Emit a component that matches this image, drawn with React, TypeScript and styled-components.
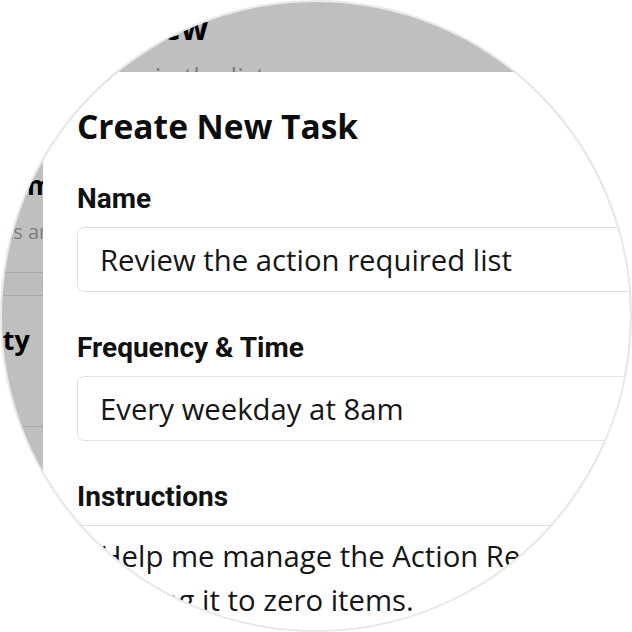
import React from "react";
import styled, { createGlobalStyle } from "styled-components";

const Global = createGlobalStyle`
  html, body { margin: 0; padding: 0; background: #ffffff; }
  body { width: 632px; height: 632px; overflow: hidden; }
  * { box-sizing: border-box; }
`;

const Frame = styled.div`
  position: relative;
  width: 632px;
  height: 632px;
  border: 2px solid #e8e8e8;
  border-radius: 50%;
  overflow: hidden;
  background: #ffffff;
`;

/* ---------- page behind the dialog ---------- */
const BackPage = styled.div`
  display: flex;
  flex-direction: column;
  width: 900px;
  padding-top: 10px;
  font-family: "Open Sans", "Liberation Sans", sans-serif;
  color: #000;
`;

const BackTitle = styled.div<{ $size: number; $indent: number; $top: number }>`
  font-weight: 700;
  font-size: ${(p) => p.$size}px;
  line-height: 1;
  white-space: nowrap;
  margin-left: ${(p) => p.$indent}px;
  margin-top: ${(p) => p.$top}px;
`;

const BackText = styled.div<{ $size: number; $indent: number; $top: number }>`
  font-weight: 400;
  font-size: ${(p) => p.$size}px;
  line-height: 1;
  color: #a8a8a8;
  white-space: nowrap;
  margin-left: ${(p) => p.$indent}px;
  margin-top: ${(p) => p.$top}px;
`;

const Band = styled.div<{ $top: number }>`
  height: 24px;
  margin-top: ${(p) => p.$top}px;
  border-top: 1px solid #e2e2e2;
  border-bottom: 1px solid #e2e2e2;
  background: #fbfbfb;
`;

const Divider = styled.div<{ $top: number }>`
  height: 1px;
  margin-top: ${(p) => p.$top}px;
  background: #e2e2e2;
`;

const Scrim = styled.div`
  position: absolute;
  inset: 0;
  background: rgba(0, 0, 0, 0.25);
`;

/* ---------- dialog ---------- */
const Dialog = styled.div`
  position: absolute;
  left: 41px;
  top: 70px;
  width: 760px;
  height: 700px;
  background: #ffffff;
  padding: 37px 0 0 34px;
  display: flex;
  flex-direction: column;
`;

const DialogTitle = styled.h1`
  margin: 0;
  font-family: "Open Sans", "Liberation Sans", sans-serif;
  font-weight: 700;
  font-size: 33.5px;
  line-height: 34px;
  color: #0d0d0d;
  white-space: nowrap;
`;

const Field = styled.div`
  display: flex;
  flex-direction: column;
  gap: 14px;
  margin-top: 42px;
`;

const Label = styled.label`
  font-family: Roboto, "Liberation Sans", sans-serif;
  font-weight: 700;
  font-size: 28px;
  line-height: 28px;
  color: #111111;
  white-space: nowrap;
`;

const TextInput = styled.input`
  width: 680px;
  height: 65px;
  padding: 0 22px;
  border: 1px solid #dde2e8;
  border-radius: 7px;
  background: #ffffff;
  font-family: "Open Sans", "Liberation Sans", sans-serif;
  font-size: 29.3px;
  color: #161616;
  outline: none;
`;

const TextArea = styled.textarea`
  width: 680px;
  height: 160px;
  padding: 8px 22px;
  border: 1px solid #dde2e8;
  border-radius: 7px;
  background: #ffffff;
  font-family: "Open Sans", "Liberation Sans", sans-serif;
  font-size: 29.3px;
  line-height: 44px;
  color: #161616;
  resize: none;
  outline: none;
`;

export default function App() {
  return (
    <>
      <Global />
      <Frame>
        <BackPage>
          <BackTitle $size={32} $indent={-33} $top={0}>
            Weekly Review
          </BackTitle>
          <BackText $size={26} $indent={-113} $top={19}>
            Check every message in the list
          </BackText>
          <BackTitle $size={26} $indent={-21} $top={83}>
            Team
          </BackTitle>
          <BackText $size={20} $indent={-31} $top={24}>
            Tasks and notes
          </BackText>
          <Band $top={30} />
          <BackTitle $size={27} $indent={-74} $top={30}>
            Priority
          </BackTitle>
          <Divider $top={73} />
        </BackPage>
        <Scrim />
        <Dialog>
          <DialogTitle>Create New Task</DialogTitle>
          <Field>
            <Label>Name</Label>
            <TextInput readOnly value="Review the action required list" />
          </Field>
          <Field>
            <Label>Frequency &amp; Time</Label>
            <TextInput readOnly value="Every weekday at 8am" />
          </Field>
          <Field>
            <Label>Instructions</Label>
            <TextArea
              readOnly
              value="Help me manage the Action Required list by getting it to zero items."
            />
          </Field>
        </Dialog>
      </Frame>
    </>
  );
}
